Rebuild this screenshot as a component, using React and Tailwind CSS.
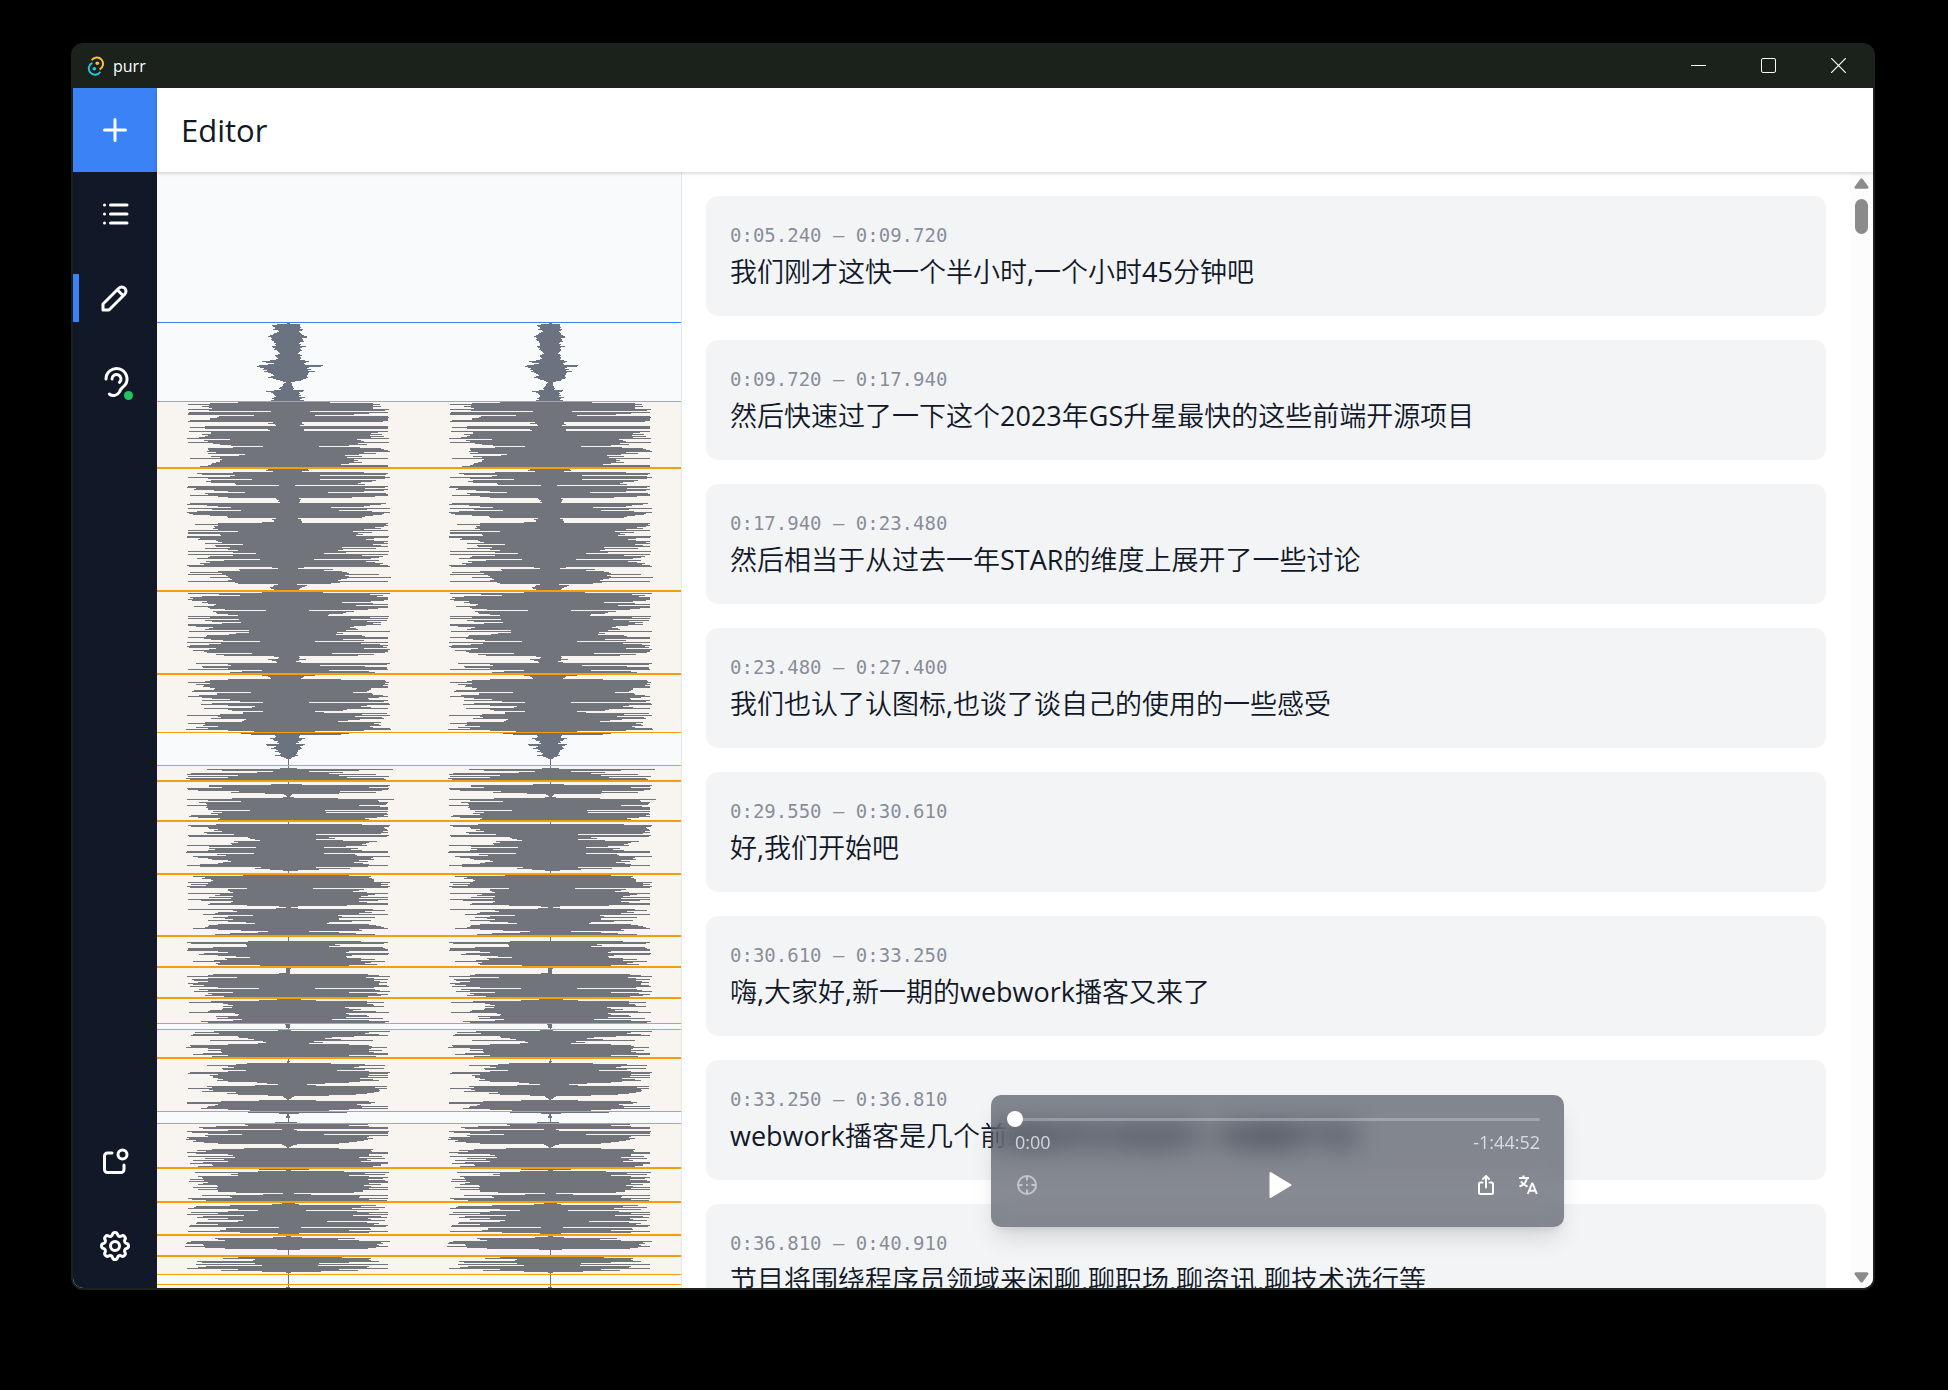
import React from "react";

const CUES = [
  ["0:05.240", "0:09.720", "我们刚才这快一个半小时,一个小时45分钟吧"],
  ["0:09.720", "0:17.940", "然后快速过了一下这个2023年GS升星最快的这些前端开源项目"],
  ["0:17.940", "0:23.480", "然后相当于从过去一年STAR的维度上展开了一些讨论"],
  ["0:23.480", "0:27.400", "我们也认了认图标,也谈了谈自己的使用的一些感受"],
  ["0:29.550", "0:30.610", "好,我们开始吧"],
  ["0:30.610", "0:33.250", "嗨,大家好,新一期的webwork播客又来了"],
  ["0:33.250", "0:36.810", "webwork播客是几个前端程序员发起的一档播客节目"],
  ["0:36.810", "0:40.910", "节目将围绕程序员领域来闲聊,聊职场,聊资讯,聊技术选行等"],
];

/* Audio peaks: [first row, "left,right left,right ..."], one pair per row. */
const INTRO = [
  151,
  "1,1 11,11 16,11 15,11 13,12 13,11 15,14 10,13 9,10 11,11 14,12 15,13 18,15 20,18 17,18 16,13 17,14 16,14 14,15 14,11 12,10 13,12 12,11 16,17 15,13 13,11 14,12 11,13 10,11 9,10 8,9 10,11 13,13 12,11 11,12 10,12 12,11 18,16 26,20 22,17 14,15 20,16 29,34 31,32 28,20 24,18 25,22 21,19 24,26 20,20 17,19 15,19 14,18 17,18 20,19 15,17 12,14 8,12 5,6 2,2 4,3 5,3 5,3 6,4 8,4 9,5 7,4 14,15 22,14 17,10 15,11 14,10 13,12 12,10 14,16 16,13 14,11 17,15",
];
const PEAKS = [
  [
    230,
    "50,41 78,84 100,91 79,84 86,92 79,84 76,84 100,100 79,96 17,21 99,99 100,80 100,65 34,26 69,99 71,100 78,99 78,99 98,99 100,94 15,13 20,13 13,15 12,11 83,99 98,99 83,99 20,15 18,15 99,99 77,89 77,82 86,93 80,81 83,95 89,82 101,100 58,68 84,72 80,75 100,100 75,69 68,78 57,60 25,30 55,71 80,92 80,95 79,99 81,101 72,75 80,87 43,70 49,56 77,73 68,58 98,99 66,65 68,69 68,65 72,73 76,60 77,52 80,99 88,99",
  ],
  [
    297,
    "20,19 22,20 15,13 55,75 91,99 86,97 53,31 58,96 100,101 80,96 36,31 77,87 82,83 77,72 53,69 52,76 9,6 100,99 101,96 92,76 94,99 74,95 60,75 43,39 83,97 80,99 98,99 70,86 60,63 12,10 11,12 9,11 10,11 8,10 98,97 101,92 81,81 70,75 57,42 100,101 76,78 47,50 91,83 101,101 99,95 95,93 78,84 61,76 60,73 12,9 16,12 14,12 14,13 26,13 70,99 93,97 70,99 74,95 73,86 75,92 70,75 100,99 50,64 100,83 100,69 68,74 67,67 101,100 101,99 88,85 90,77 72,85 70,99 66,95 83,99 45,84 73,92 72,99 58,53 83,87 60,54 50,49 100,100 55,57 32,35 100,99 55,73 78,94 80,90 91,82 28,25 64,90 82,77 78,86 88,94 84,91 101,99 99,101 16,15 10,9 49,44 48,35 70,53 98,58 66,60 100,90 62,56 60,60 78,102 58,58 56,52 60,49 100,99 53,51 50,42 10,8 14,18 15,16 18,13 17,11 14,10",
  ],
  [
    420,
    "26,34 100,101 69,81 48,94 86,88 98,99 95,99 100,99 96,95 81,82 86,53 80,84 72,99 74,67 94,99 80,99 78,89 63,79 22,20 75,65 72,57 71,54 60,40 50,39 100,100 78,81 100,99 49,62 83,98 76,78 47,92 66,84 100,92 100,77 92,65 75,61 79,67 83,69 39,57 99,101 39,48 52,54 59,47 81,73 82,76 100,99 84,99 77,54 65,75 28,26 101,99 67,72 79,91 98,99 101,94 99,98 72,75 79,101 95,99 84,99 81,96 36,43 72,85 64,69 14,10 9,11 10,10 20,17 16,10 12,7 11,12 92,101 60,98 57,31 86,76 85,98 60,98 100,99 26,40 46,80 58,86",
  ],
  [
    503,
    "26,26 20,15 18,14 17,12 60,52 78,96 83,97 100,100 78,96 92,99 84,94 85,99 78,99 73,82 74,82 94,80 96,78 37,64 71,83 71,84 89,94 100,99 86,90 76,79 58,80 86,99 48,95 25,20 76,100 87,101 60,78 33,72 36,82 84,99 60,58 56,54 25,26 45,35 45,98 68,73 101,101 70,66 67,93 77,95 42,71 44,59 46,49 83,92 100,85 83,90 85,92 70,81 92,84 80,101 102,102 60,75 34,26",
  ],
  [
    561,
    "47,60 37,52 13,11 12,10 13,10 18,16 15,13 14,12 10,9 11,10 9,7 22,16 21,14 12,11 14,12 17,13 12,11 10,9 13,9 9,8 7,8 8,7 13,9 7,6 4,3 2,2",
  ],
  [596, "8,8 81,104 66,70 15,20 31,54 97,40 101,87 50,50 100,100 60,58 102,95 98,97"],
  [
    612,
    "17,13 79,101 79,99 66,80 101,100 100,99 90,93 49,51 57,87 23,50 4,3 2,2 1,1 5,5 56,49 101,105 80,89 47,90 89,99 82,98 81,97 101,70 81,91 82,99 80,99 80,99 38,36 75,99 66,37 77,98 70,99 97,95 99,99 90,88 68,76 70,80",
  ],
  [
    652,
    "72,73 100,101 97,100 80,95 79,96 70,98 74,99 66,94 84,99 81,92 54,27 100,100 99,98 40,40 38,46 33,27 28,54 54,88 50,80 57,77 56,73 101,78 79,57 32,35 79,69 73,62 80,73 101,99 102,99 34,35 71,66 62,68 95,101 90,84 80,82 76,85 60,70 57,79 65,65 70,74 88,80 101,99 88,79 27,27 33,61 18,30 5,9",
  ],
  [
    703,
    "45,60 95,82 83,80 86,83 77,85 75,85 77,85 100,101 80,92 97,99 82,92 101,101 98,99 41,24 60,75 60,70 58,64 55,78 100,99 68,86 73,79 55,72 79,99 57,70 100,99 87,89 55,70 57,78 78,99 80,99 41,58 9,9 2,2 12,9 100,84 55,96 51,76 70,83 73,70 85,99 35,49 60,53 75,86 63,50 55,50 80,82 60,63 42,40 33,38 70,80 79,87 80,92 83,95 95,99 70,70 47,73 20,20 30,50 58,67 73,86",
  ],
  [
    769,
    "40,72 101,99 97,95 42,46 41,51 41,40 75,94 100,96 100,99 101,99 70,60 60,57 84,100 89,99 70,63 52,57 38,58 63,72 61,86 74,72 95,96 68,82 72,76 70,88 28,60",
  ],
  [
    796,
    "2,2 2,1 2,1 2,1 2,1 9,1 75,79 80,90 101,101 51,77 80,85 96,99 94,85 80,91 90,98 100,90 95,90 84,98 98,100 70,85 29,26 89,86 80,91 94,101 55,60 80,88 76,99 83,92 64,79",
  ],
  [
    827,
    "11,12 29,27 77,78 99,95 65,78 60,84 55,85 65,95 56,56 65,60 66,72 78,64 80,87 99,100 53,57 49,60 50,78 72,80 60,57 71,94 46,43 55,80 87,100 80,96",
  ],
  [852, "3,1 2,1 2,1 2,1"],
  [
    858,
    "10,2 74,101 93,80 69,76 95,90 97,99 50,65 49,43 40,36 34,52 78,84 25,25 22,34 30,20 60,60 98,80 97,83 102,98 80,82 67,80 80,93 67,80 66,85 85,99 95,99 60,60 76,87",
  ],
  [
    889,
    "1,1 1,0 41,42 52,76 81,96 60,70 54,65 66,95 65,76 42,48 60,80 98,101 100,99 70,80 78,99 75,79 75,99 70,71 65,84 71,90 60,71 31,60 21,36 10,18 33,27 81,98 76,86 100,98 79,90 75,91 86,90 52,85 61,78 50,67 20,40 5,5 4,3 2,2 1,0 29,27 67,80 101,86 101,82 70,68 73,72 80,99 81,73 87,99 60,60 38,40",
  ],
  [940, "40,58 9,10 1,0 1,0 2,1 2,1"],
  [
    950,
    "13,8 13,8 43,79 40,60 72,80 89,99 85,99 6,5 60,8 101,100 96,99 80,99 46,35 83,99 80,80 101,78 99,84 102,79 92,75 95,68 84,60 70,50 6,8 4,4 2,2 1,0 44,50 76,84 91,82 82,83 101,99 92,99 60,80 55,80 100,93 53,70 83,96 64,78 95,82 60,72 85,99 98,99 76,92 75,92 90,84",
  ],
  [
    997,
    "29,20 2,2 30,55 93,100 50,76 57,96 50,60 90,80 86,99 85,94 98,79 84,96 99,99 80,99 85,80 90,92 71,75 70,82 95,99 71,80 90,99 70,74 70,74 52,65 5,5 25,22 86,99 58,71 56,70 100,99 96,80 82,98",
  ],
  [
    1031,
    "6,6 16,10 58,87 92,72 94,96 100,63 50,90 30,17 60,68 97,99 70,80 101,99 44,64 85,92 91,98 60,79 80,82 45,96 50,38 91,78 92,90 70,85 98,99 99,97 9,12 62,81 62,82 68,60 100,99 48,80 10,10",
  ],
  [1064, "2,2 15,13 73,66 70,49 63,70 97,101 101,92 102,94 85,88 84,90 103,99 83,87 63,79 11,11"],
  [1085, "50,53 65,82 33,80 35,82 91,90 86,60 33,30 92,99 26,29 82,80 90,78 101,99 50,50 67,69 26,32 2,2"],
  [1115, "2,1"],
];

/* Spoken segments as [start row, end row] and the marker lines as [row, thickness]. */
const SEGMENTS = [
  [229, 561],
  [593, 852],
  [857, 940],
  [951, 1103],
  [1112, 1116],
];
const MARKERS = [
  [229, 1], [295, 2], [418, 2], [501, 2], [560, 1], [593, 1], [608, 2], [648, 2], [701, 2],
  [763, 2], [794, 2], [825, 2], [851, 1], [857, 1], [885, 2], [939, 1], [951, 1], [995, 2],
  [1029, 2], [1062, 2], [1083, 2], [1102, 1], [1112, 1],
];

function peaksToPath([start, rows], cx, scale = 1) {
  return rows
    .split(" ")
    .map((pair, i) => {
      const [l, r] = pair.split(",").map((n) => Math.round(Number(n) * scale));
      return `M${cx - l} ${start + i}h${l + r + 1}v1h${-(l + r + 1)}z`;
    })
    .join("");
}

function Waveform() {
  return (
    <svg className="block h-[1116px] w-full" viewBox="0 0 524 1116" preserveAspectRatio="none" shapeRendering="crispEdges" role="img" aria-label="Waveform">
      {[131, 393].map((cx, i) => (
        <g key={cx} fill="#6b7280">
          <rect x={cx} y="151" width="1" height="965" />
          <path d={peaksToPath(INTRO, cx, i ? 0.8 : 1)} />
          <path d={PEAKS.map((p) => peaksToPath(p, cx)).join("")} />
        </g>
      ))}
      {SEGMENTS.map(([a, b]) => (
        <rect key={a} x="0" y={a} width="524" height={b - a} fill="#f59e0b" fillOpacity="0.05" />
      ))}
      <rect x="0" y="150" width="524" height="1" fill="#3b82f6" />
      {MARKERS.map(([y, h]) => (
        <rect key={y} x="0" y={y} width="524" height={h} fill="#f59e0b" />
      ))}
    </svg>
  );
}

function Icon({ children, className = "size-9" }) {
  return (
    <svg className={className} viewBox="0 0 24 24" fill="none" stroke="currentColor" strokeWidth="2" strokeLinecap="round" strokeLinejoin="round" aria-hidden="true">
      {children}
    </svg>
  );
}

function NavButton({ label, active, dot, children }) {
  return (
    <button type="button" aria-label={label} className="relative flex h-[84px] w-full items-center justify-center text-white">
      {active && <span className="absolute left-0 h-12 w-1.5 bg-[#3b82f6]" />}
      <Icon>{children}</Icon>
      {dot && <span className="absolute right-6 bottom-6 size-[9px] rounded-full bg-[#22c55e]" />}
    </button>
  );
}

function Sidebar() {
  return (
    <nav className="flex w-[84px] shrink-0 flex-col bg-[#111827]">
      <div className="bg-[#3b82f6]">
        <NavButton label="New">
          <path d="M12 5v14M5 12h14" />
        </NavButton>
      </div>
      <NavButton label="List">
        <path d="M9 6h11M9 12h11M9 18h11M5 6v.01M5 12v.01M5 18v.01" />
      </NavButton>
      <NavButton label="Editor" active>
        <path d="M4 20h4l10.5-10.5a2.828 2.828 0 1 0-4-4L4 16v4M13.5 6.5l4 4" />
      </NavButton>
      <NavButton label="Transcribe" dot>
        <path d="M6 10a7 7 0 1 1 13 3.6 10 10 0 0 1-2 2 8 8 0 0 0-2 3 4.5 4.5 0 0 1-6.8 1.4" />
        <path d="M10 10a3 3 0 1 1 5 2.2" />
      </NavButton>
      <div className="mt-auto">
        <NavButton label="Notifications">
          <path d="M10 6H7a2 2 0 0 0-2 2v9a2 2 0 0 0 2 2h9a2 2 0 0 0 2-2v-3" />
          <circle cx="17" cy="7" r="3" />
        </NavButton>
        <NavButton label="Settings">
          <path d="M10.325 4.317c.426-1.756 2.924-1.756 3.35 0a1.724 1.724 0 0 0 2.573 1.066c1.543-.94 3.31.826 2.37 2.37a1.724 1.724 0 0 0 1.065 2.572c1.756.426 1.756 2.924 0 3.35a1.724 1.724 0 0 0-1.066 2.573c.94 1.543-.826 3.31-2.37 2.37a1.724 1.724 0 0 0-2.572 1.065c-.426 1.756-2.924 1.756-3.35 0a1.724 1.724 0 0 0-2.573-1.066c-1.543.94-3.31-.826-2.37-2.37a1.724 1.724 0 0 0-1.065-2.572c-1.756-.426-1.756-2.924 0-3.35a1.724 1.724 0 0 0 1.066-2.573c-.94-1.543.826-3.31 2.37-2.37 1 .608 2.296.07 2.572-1.065z" />
          <circle cx="12" cy="12" r="3" />
        </NavButton>
      </div>
    </nav>
  );
}

function TitleBar() {
  const control = "flex h-full w-[70px] items-center justify-center";
  return (
    <div className="flex h-[45px] shrink-0 items-center pl-3.5 text-white">
      <svg className="mr-1.5 size-5" viewBox="0 0 20 20" fill="none" strokeWidth="1.9" aria-hidden="true">
        <path d="M4.600 4.200A6.300 6.300 0 1 1 12.600 13.400" stroke="#ffc131" />
        <path d="M5.300 6.800A6.300 6.300 0 1 0 13.400 15.800" stroke="#24c8db" />
        <circle cx="10.300" cy="7.300" r="1.8" fill="#ffc131" />
        <circle cx="7.300" cy="12.800" r="1.8" fill="#24c8db" />
      </svg>
      <span className="text-base">purr</span>
      <div className="ml-auto flex h-full">
        <button type="button" aria-label="Minimize" className={control}>
          <span className="h-px w-[15px] bg-white" />
        </button>
        <button type="button" aria-label="Maximize" className={control}>
          <span className="size-[15px] rounded-xs border border-white" />
        </button>
        <button type="button" aria-label="Close" className={control}>
          <svg className="size-[15px]" viewBox="0 0 15 15" stroke="currentColor" strokeWidth="1.2">
            <path d="M0 0L15 15M15 0L0 15" />
          </svg>
        </button>
      </div>
    </div>
  );
}

function ScrollBar() {
  return (
    <div className="flex w-[23px] shrink-0 flex-col items-center bg-[#fcfcfc] pt-1.5 pb-[5px] text-[#8b8b8b]">
      <svg className="h-[11px] w-[15px]" viewBox="0 0 15 11" fill="currentColor" stroke="currentColor" strokeWidth="3" strokeLinejoin="round">
        <path d="M7.5 2L13 9.300H2z" />
      </svg>
      <span className="mt-2.5 h-[35px] w-[13px] rounded-full bg-[#8b8b8b]" />
      <svg className="mt-auto h-[11px] w-[15px]" viewBox="0 0 15 11" fill="currentColor" stroke="currentColor" strokeWidth="3" strokeLinejoin="round">
        <path d="M7.5 9L2 1.700H13z" />
      </svg>
    </div>
  );
}

function Player() {
  return (
    <div className="flex w-[573px] flex-col rounded-[10px] bg-[#111827]/50 px-6 pt-4 pb-[18px] text-white shadow-[0_15px_24px_-4px_rgb(0_0_0/0.12),0_6px_9px_-4px_rgb(0_0_0/0.1)] backdrop-blur-[12px]">
      <div className="grid items-center">
        <div className="col-start-1 row-start-1 h-[3px] rounded-full bg-white/25" />
        <input
          type="range"
          min="0"
          max="6292"
          defaultValue="0"
          aria-label="Position"
          className="col-start-1 row-start-1 -mx-2 h-4 appearance-none bg-transparent [&::-webkit-slider-thumb]:size-4 [&::-webkit-slider-thumb]:appearance-none [&::-webkit-slider-thumb]:rounded-full [&::-webkit-slider-thumb]:bg-white"
        />
      </div>
      <div className="flex justify-between text-[18px] leading-[30px] text-white/70">
        <span>0:00</span>
        <span>-1:44:52</span>
      </div>
      <div className="mt-1 grid h-12 grid-cols-3 items-center">
        <button type="button" aria-label="Locate" className="justify-self-start opacity-50">
          <Icon className="size-6">
            <circle cx="12" cy="12" r="9" />
            <path d="M12 4v3.5M12 16.5V20M4 12h3.5M16.5 12H20M11 12h2" strokeLinecap="butt" />
          </Icon>
        </button>
        <button type="button" aria-label="Play" className="justify-self-center">
          <svg className="size-9" viewBox="0 0 36 36" fill="currentColor" stroke="currentColor" strokeWidth="2" strokeLinejoin="round">
            <path d="M10.500 6V30L30.500 18z" />
          </svg>
        </button>
        <div className="flex gap-[18px] justify-self-end">
          <button type="button" aria-label="Export">
            <Icon className="size-6">
              <path d="M8.500 9.500H6.500A1.500 1.500 0 0 0 5 11v8.500A1.500 1.500 0 0 0 6.500 21h11a1.500 1.500 0 0 0 1.500-1.500V11A1.500 1.500 0 0 0 17.500 9.500H15.500" />
              <path d="M12 14.500V3M9 6l3-3 3 3" />
            </Icon>
          </button>
          <button type="button" aria-label="Translate">
            <Icon className="size-6">
              <path d="M7.500 2.500V5M3 5H13M11 5C10.500 9 7.500 12 3.500 13.500M5 8.500C6.500 11 8.500 12.500 11.500 13.500" strokeLinecap="butt" />
              <path d="M11.800 21L16 10.500H16.600L20.800 21M13.500 17.800H19" strokeLinecap="butt" />
            </Icon>
          </button>
        </div>
      </div>
    </div>
  );
}

/* Chinese is set a little lighter than the Latin words and digits inside it. */
function MixedText({ children }) {
  return children.split(/([A-Za-z0-9,]+)/).map((part, i) =>
    i % 2 ? (
      <span key={i} className="font-normal">
        {part}
      </span>
    ) : (
      part
    )
  );
}

export default function App() {
  return (
    <div className="flex h-screen bg-black pt-[43px] pr-[73px] pb-[100px] pl-[71px] font-['Open_Sans','Noto_Sans_CJK_SC',sans-serif] text-[#111827]">
      <div className="flex min-w-0 flex-1 flex-col overflow-hidden rounded-xl bg-[#1b211b] px-0.5 pb-0.5">
        <TitleBar />
        <div className="flex min-h-0 flex-1 overflow-hidden rounded-b-[10px] bg-white">
          <Sidebar />
          <div className="flex min-w-0 flex-1 flex-col">
            <header className="z-10 flex h-[84px] shrink-0 items-center bg-white px-6 shadow-[0_1px_4px_rgb(0_0_0/0.2)]">
              <h1 className="text-[31px] leading-[42px]">Editor</h1>
            </header>
            <main className="flex min-h-0 flex-1">
              <section className="w-[525px] shrink-0 overflow-hidden border-r border-[#e5e7eb] bg-[#f9fafc]">
                <Waveform />
              </section>
              <section className="relative flex min-w-0 flex-1 overflow-hidden">
                <ul className="flex min-w-0 flex-1 flex-col gap-6 overflow-hidden p-6">
                  {CUES.map(([from, to, text]) => (
                    <li key={from} className="shrink-0 rounded-xl bg-[#f3f4f6] px-6 pt-6 pb-[22px]">
                      <p className="font-['DejaVu_Sans_Mono',monospace] text-[19px] leading-[30px] text-[#6b7280]/80">
                        {from} – {to}
                      </p>
                      <p className="truncate text-[27px] leading-[44px] font-[350]">
                        <MixedText>{text}</MixedText>
                      </p>
                    </li>
                  ))}
                </ul>
                <ScrollBar />
                <div className="absolute inset-x-0 bottom-[61px] flex justify-center">
                  <Player />
                </div>
              </section>
            </main>
          </div>
        </div>
      </div>
    </div>
  );
}
